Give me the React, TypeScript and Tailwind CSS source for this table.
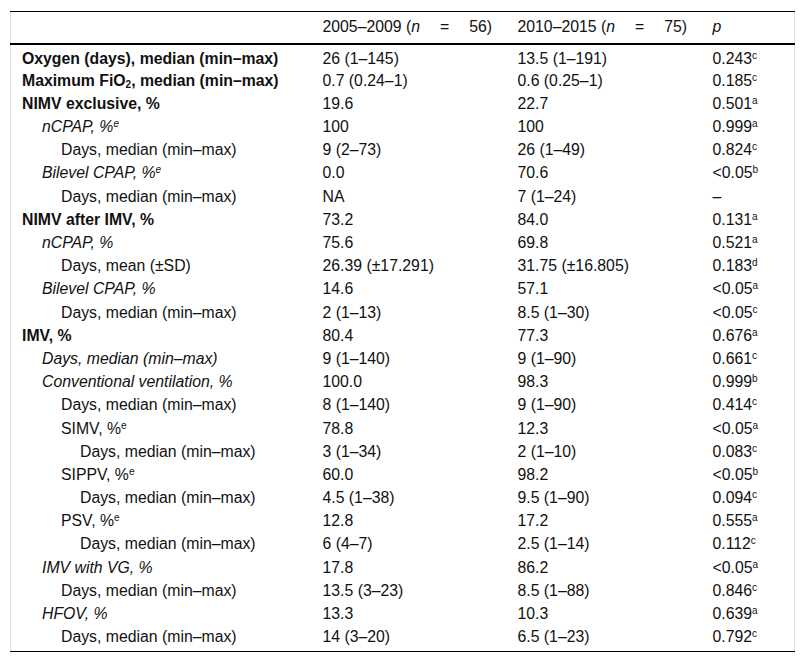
import React from "react";

type Row = {
  label: React.ReactNode;
  level: number;
  bold?: boolean;
  italic?: boolean;
  a: string;
  b: string;
  p: string;
  sup?: string;
};

const rows: Row[] = [
  { label: "Oxygen (days), median (min–max)", level: 0, bold: true, a: "26 (1–145)", b: "13.5 (1–191)", p: "0.243", sup: "c" },
  {
    label: (
      <>
        Maximum FiO<sub className="text-[10px]">2</sub>, median (min–max)
      </>
    ),
    level: 0,
    bold: true,
    a: "0.7 (0.24–1)",
    b: "0.6 (0.25–1)",
    p: "0.185",
    sup: "c",
  },
  { label: "NIMV exclusive, %", level: 0, bold: true, a: "19.6", b: "22.7", p: "0.501", sup: "a" },
  { label: <>nCPAP, %<sup className="text-[10px]">e</sup></>, level: 1, italic: true, a: "100", b: "100", p: "0.999", sup: "a" },
  { label: "Days, median (min–max)", level: 2, a: "9 (2–73)", b: "26 (1–49)", p: "0.824", sup: "c" },
  { label: <>Bilevel CPAP, %<sup className="text-[10px]">e</sup></>, level: 1, italic: true, a: "0.0", b: "70.6", p: "<0.05", sup: "b" },
  { label: "Days, median (min–max)", level: 2, a: "NA", b: "7 (1–24)", p: "–" },
  { label: "NIMV after IMV, %", level: 0, bold: true, a: "73.2", b: "84.0", p: "0.131", sup: "a" },
  { label: "nCPAP, %", level: 1, italic: true, a: "75.6", b: "69.8", p: "0.521", sup: "a" },
  { label: "Days, mean (±SD)", level: 2, a: "26.39 (±17.291)", b: "31.75 (±16.805)", p: "0.183", sup: "d" },
  { label: "Bilevel CPAP, %", level: 1, italic: true, a: "14.6", b: "57.1", p: "<0.05", sup: "a" },
  { label: "Days, median (min–max)", level: 2, a: "2 (1–13)", b: "8.5 (1–30)", p: "<0.05", sup: "c" },
  { label: "IMV, %", level: 0, bold: true, a: "80.4", b: "77.3", p: "0.676", sup: "a" },
  { label: "Days, median (min–max)", level: 1, italic: true, a: "9 (1–140)", b: "9 (1–90)", p: "0.661", sup: "c" },
  { label: "Conventional ventilation, %", level: 1, italic: true, a: "100.0", b: "98.3", p: "0.999", sup: "b" },
  { label: "Days, median (min–max)", level: 2, a: "8 (1–140)", b: "9 (1–90)", p: "0.414", sup: "c" },
  { label: <>SIMV, %<sup className="text-[10px]">e</sup></>, level: 2, a: "78.8", b: "12.3", p: "<0.05", sup: "a" },
  { label: "Days, median (min–max)", level: 3, a: "3 (1–34)", b: "2 (1–10)", p: "0.083", sup: "c" },
  { label: <>SIPPV, %<sup className="text-[10px]">e</sup></>, level: 2, a: "60.0", b: "98.2", p: "<0.05", sup: "b" },
  { label: "Days, median (min–max)", level: 3, a: "4.5 (1–38)", b: "9.5 (1–90)", p: "0.094", sup: "c" },
  { label: <>PSV, %<sup className="text-[10px]">e</sup></>, level: 2, a: "12.8", b: "17.2", p: "0.555", sup: "a" },
  { label: "Days, median (min–max)", level: 3, a: "6 (4–7)", b: "2.5 (1–14)", p: "0.112", sup: "c" },
  { label: "IMV with VG, %", level: 1, italic: true, a: "17.8", b: "86.2", p: "<0.05", sup: "a" },
  { label: "Days, median (min–max)", level: 2, a: "13.5 (3–23)", b: "8.5 (1–88)", p: "0.846", sup: "c" },
  { label: "HFOV, %", level: 1, italic: true, a: "13.3", b: "10.3", p: "0.639", sup: "a" },
  { label: "Days, median (min–max)", level: 2, a: "14 (3–20)", b: "6.5 (1–23)", p: "0.792", sup: "c" },
];

const indent = ["pl-[11px]", "pl-[31px]", "pl-[50px]", "pl-[69px]"];

export default function App() {
  return (
    <div className="bg-white w-[804px] h-[666px] pt-[11px] px-[10px] font-['Liberation_Sans',Arial,sans-serif] text-[15.8px] text-[#111]">
      <table className="w-[784px] table-fixed border-collapse border-x border-[#e0e0e0]">
        <colgroup>
          <col className="w-[300px]" />
          <col className="w-[195px]" />
          <col className="w-[195px]" />
          <col className="w-[94px]" />
        </colgroup>
        <thead>
          <tr className="h-[32px] border-t border-t-black border-b-2 border-b-black">
            <th />
            <th className="px-3 text-left font-normal whitespace-nowrap">
              2005–2009 (<i>n</i>
              <span className="mx-[20px]">=</span>56)
            </th>
            <th className="px-3 text-left font-normal whitespace-nowrap">
              2010–2015 (<i>n</i>
              <span className="mx-[20px]">=</span>75)
            </th>
            <th className="px-3 text-left font-normal italic">p</th>
          </tr>
        </thead>
        <tbody className="border-b border-black">
          {rows.map((r, i) => (
            <tr key={i} className="h-[23.2px] leading-none align-top">
              <td
                className={`${indent[r.level]} pt-[6px] pr-2 whitespace-nowrap ${r.bold ? "font-bold" : ""} ${
                  r.italic ? "italic" : ""
                }`}
              >
                {r.label}
              </td>
              <td className="px-3 pt-[6px] whitespace-nowrap">{r.a}</td>
              <td className="px-3 pt-[6px] whitespace-nowrap">{r.b}</td>
              <td className="px-3 pt-[6px] whitespace-nowrap">
                {r.p}
                {r.sup && <sup className="text-[10px]">{r.sup}</sup>}
              </td>
            </tr>
          ))}
          <tr className="h-[5px]">
            <td colSpan={4} />
          </tr>
        </tbody>
      </table>
    </div>
  );
}
